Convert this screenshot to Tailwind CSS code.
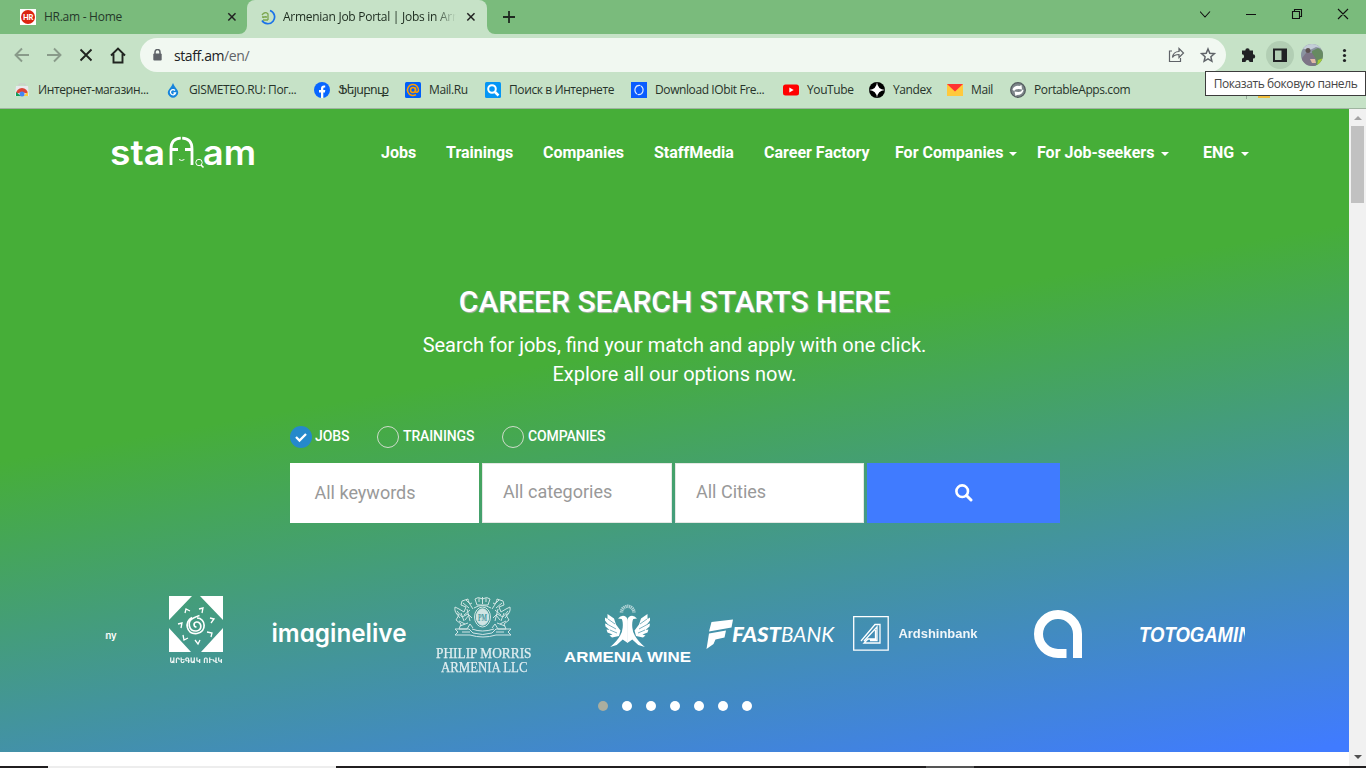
<!DOCTYPE html>
<html lang="en">
<head>
<meta charset="utf-8">
<title>Armenian Job Portal</title>
<script src="https://cdn.jsdelivr.net/npm/@tailwindcss/browser@4"></script>
</head>
<body class="relative flex h-[768px] w-[1366px] flex-col overflow-hidden bg-white font-['Roboto',sans-serif]">

<!-- Tab strip -->
<div class="flex h-[34px] shrink-0 bg-[#7abb7c] font-['Open_Sans','Noto_Sans',sans-serif] text-[12px] tracking-[-.27px] text-[#25382a]">
  <div class="flex w-[247px] items-center pl-5">
    <svg class="size-4" viewBox="0 0 16 16"><rect width="16" height="16" fill="#fff"/><circle cx="8" cy="8" r="7" fill="#dc2410"/><text x="8" y="10.800" font-size="7.500" font-weight="900" fill="#fff" text-anchor="middle" font-family="Lato">HR</text></svg>
    <span class="ml-2 w-[183px] whitespace-nowrap">HR.am - Home</span>
    <svg class="size-[10px]" viewBox="0 0 10 10"><path d="M1.300 1.300l7.200 7.200M8.500 1.300L1.300 8.500" stroke="#222" stroke-width="1.500"/></svg>
  </div>
  <div class="relative flex w-[240px] items-center rounded-t-[8px] bg-[#c6e2c7] pl-[13px]">
    <svg class="absolute bottom-0 -left-2 size-2" viewBox="0 0 8 8"><path d="M8 0v8H0a8 8 0 0 0 8-8" fill="#c6e2c7"/></svg>
    <svg class="absolute -right-2 bottom-0 size-2" viewBox="0 0 8 8"><path d="M0 0v8h8a8 8 0 0 1-8-8" fill="#c6e2c7"/></svg>
    <svg class="size-4" viewBox="0 0 16 16" fill="none"><path d="M10 1.500A6.800 6.800 0 1 1 2 11.500" stroke="#1a73e8" stroke-width="1.700"/><path d="M2 6Q5 2 8 5v6M2 8h5M3 9q1-2 4-1M3 11h5" stroke="#7ba64e" stroke-width="1.300"/></svg>
    <span class="ml-[7px] w-[173px] overflow-hidden mask-r-from-88% whitespace-nowrap text-[#1c2b1e]">Armenian Job Portal | Jobs in Armenia</span>
    <svg class="ml-[10px] size-[10px]" viewBox="0 0 10 10"><path d="M1.300 1.300l7.200 7.200M8.500 1.300L1.300 8.500" stroke="#222" stroke-width="1.500"/></svg>
  </div>
  <svg class="ml-4 mt-[11px] size-3" viewBox="0 0 12 12"><path d="M6 0v12M0 6h12" stroke="#1f2a20" stroke-width="1.800"/></svg>
  <svg class="ml-auto h-[34px] w-[166px]" viewBox="1200 0 166 34" fill="none" stroke="#111" stroke-width="1.100"><path d="M1200 11.500l5 5.500 5-5.500M1246 14.500h10M1292.500 11.500h7v7h-7zM1294.500 11.500v-2h7v7h-2M1338 9l10 10M1348 9l-10 10"/></svg>
</div>

<!-- Toolbar -->
<div class="flex h-[38px] shrink-0 items-end bg-[#c6e2c7] font-['Open_Sans','Noto_Sans',sans-serif] text-[14px]">
  <svg class="h-[38px] w-[140px]" viewBox="0 34 140 38" fill="none" stroke-width="1.900"><path d="M29 55H16M22 48.500L15.500 55l6.500 6.500M47 55h13M54 48.500l6.500 6.500-6.500 6.500" stroke="#899b8a"/><path d="M80.500 49.500l11 11M91.500 49.500l-11 11M111 55.500l7-7 7 7M113.500 54v8.500h9V54" stroke="#202420"/></svg>
  <div class="flex h-[34px] w-[1086px] items-center rounded-full bg-[#f1f8f1] pl-[13px]">
    <svg class="h-3 w-[9px]" viewBox="0 0 9 12"><path d="M2 5V3a2.500 2.500 0 0 1 5 0v2" fill="none" stroke="#5f6368" stroke-width="1.500"/><rect x=".3" y="4.500" width="8.400" height="7" rx="1" fill="#5f6368"/></svg>
    <span class="ml-3 tracking-[-.4px] text-[#202124]">staff.am<span class="text-[#5f6368]">/en/</span></span>
    <svg class="ml-auto h-[34px] w-[60px]" viewBox="1166 38 60 34" fill="none" stroke="#5f6368" stroke-width="1.200"><path d="M1172 51h-2.500v10.500h11V58M1172.500 57.500c.5-4 3-6 6.500-6v-3l4.500 4.500-4.500 4.500v-3c-3 0-5 .5-6.500 3z"/><path stroke-width="1.500" d="M1208 49l1.800 4.300 4.600.4-3.500 3.100 1 4.500-3.900-2.400-3.900 2.400 1-4.500-3.500-3.100 4.600-.4z"/></svg>
  </div>
  <svg class="h-[38px] w-[140px]" viewBox="1226 34 140 38"><path fill="#202124" d="M1242 50.500h3.300a2.200 2.200 0 1 1 4.400 0h3.300v3.700a2.200 2.200 0 1 1 0 4.400v3.400h-3.500a2 2 0 0 0-4 0H1242v-3.500a2.100 2.100 0 0 0 0-4.200z"/><circle cx="1280" cy="55" r="14" fill="#b2ceb4"/><path d="M1274 49.500h12v11.500h-12z" fill="none" stroke="#202124" stroke-width="2"/><path d="M1281.500 49h4.500v12h-4.500z" fill="#202124"/><clipPath id="avatar"><circle cx="1312" cy="55" r="11"/></clipPath><g clip-path="url(#avatar)"><path fill="#8a93a0" d="M1300 43h24v24h-24z"/><path fill="#c3cdd7" d="M1300 43h24v6l-8-2-6 3-10-2z"/><path fill="#668a61" d="M1312 51l6-3 6 4v15h-12z"/><path fill="#7d7486" d="M1302 58l4-5h6l4 6v8h-14z"/><circle cx="1308" cy="50.500" r="2.500" fill="#5d5150"/><path fill="#a3cd38" d="M1318 60l6-2v8h-7z"/><path fill="#e0bba5" d="M1310 59h5l1 4h-4z"/></g><g fill="#202124"><circle cx="1344.500" cy="50.500" r="1.600"/><circle cx="1344.500" cy="55.500" r="1.600"/><circle cx="1344.500" cy="60.500" r="1.600"/></g></svg>
</div>

<!-- Bookmarks -->
<div class="flex h-[37px] shrink-0 items-center whitespace-nowrap border-b border-[#9fb4a0] bg-[#c6e2c7] pl-[14px] font-['Open_Sans','Noto_Sans','DejaVu_Sans',sans-serif] text-[12px] tracking-[-.4px] text-[#26332a]">
  <div class="flex w-[151px] items-center gap-2"><svg class="size-4" viewBox="0 0 16 16"><path d="M2 4h12l1 10H1z" fill="#e8eaed"/><path d="M5 4V2h6v2" fill="none" stroke="#ccc"/><path d="M2 12a6 6 0 0 1 12 0l-6-2z" fill="#db4437"/><path d="M2 10l5 4H2z" fill="#0f9d58"/><path d="M9 14l5-4v4z" fill="#ffcd40"/><circle cx="8" cy="12" r="2.500" fill="#4285f4"/></svg><span>Интернет-магазин...</span></div>
  <div class="flex w-[149px] items-center gap-2"><svg class="size-4" viewBox="0 0 16 16"><path d="M8 1Q9 4 12 7.500a5 5 0 1 1-8 0Q7 4 8 1" fill="#1684dc"/><path d="M10 8.500a2.600 2.600 0 1 0 .5 2.500H8.500" fill="none" stroke="#fff" stroke-width="1.300"/></svg><span>GISMETEO.RU: Пог...</span></div>
  <div class="flex w-[91px] items-center gap-2"><svg class="size-4" viewBox="0 0 16 16"><circle cx="8" cy="8" r="8" fill="#0866ff"/><path d="M7 16v-5.500H5V8h2V6.500C7 4 8.500 3.200 11.200 3.600v2C9.800 5.500 9.300 5.700 9.300 7v1h2l-.4 2.500H9.300V16z" fill="#fff"/></svg><span class="tracking-[-.7px]">Ֆեյսբուք</span></div>
  <div class="flex w-[80px] items-center gap-2"><svg class="size-4" viewBox="0 0 16 16"><rect width="16" height="16" rx="1.500" fill="#005ff9"/><g fill="none" stroke="#ff9e00" stroke-width="1.500"><circle cx="8" cy="8" r="2.500"/><path d="M10.500 5.500V9c0 2 3 1.500 3-1A5.500 5.500 0 1 0 11 12.600"/></g></svg><span>Mail.Ru</span></div>
  <div class="flex w-[146px] items-center gap-2"><svg class="size-4" viewBox="0 0 16 16"><rect width="16" height="16" rx="1.500" fill="#0596f5"/><circle cx="7" cy="7" r="3.800" fill="none" stroke="#fff" stroke-width="2"/><path d="M10 10l3.500 3.500" stroke="#fff" stroke-width="2.500"/></svg><span>Поиск в Интернете</span></div>
  <div class="flex w-[152px] items-center gap-2"><svg class="size-4" viewBox="0 0 16 16" fill="none"><rect width="16" height="16" fill="#0b5cff"/><path d="M9.500 3.500c-6-1-7 6-3.500 8.500M6.500 12.500c6 1 7-6 3.500-8.500" stroke="#d9e8ff" stroke-width="1.200"/></svg><span>Download IObit Fre...</span></div>
  <div class="flex w-[86px] items-center gap-2"><svg class="size-4" viewBox="0 0 16 16"><rect y="2.500" width="16" height="11" rx="2.500" fill="#f00"/><path d="M6.300 5.500v5l4.400-2.500z" fill="#fff"/></svg><span>YouTube</span></div>
  <div class="flex w-[78px] items-center gap-2"><svg class="size-4" viewBox="0 0 16 16"><circle cx="8" cy="8" r="8" fill="#000"/><path d="M8 0Q8.500 7.500 16 8 8.500 8.500 8 16 7.500 8.500 0 8 7.500 7.500 8 0" fill="#fff"/></svg><span>Yandex</span></div>
  <div class="flex w-[63px] items-center gap-2"><svg class="size-4" viewBox="0 0 16 16"><path d="M0 2h16v12H0z" fill="#ffc93c"/><path d="M0 2h16L8 9.500z" fill="#f33"/></svg><span>Mail</span></div>
  <div class="flex w-[236px] items-center gap-2"><svg class="size-4" viewBox="0 0 16 16"><circle cx="8" cy="8" r="7.300" fill="#7d868a" stroke="#555d60" stroke-width="1.300"/><path d="M2.500 7.500q2-4.500 7-3.500l2-1 .5 4.500-3.500-.5q-3 0-4.500 2zM13.500 8q-1 5-6.500 5l-1.500 1-1-4.500 4 .5q3 0 4-2.500" fill="#fff"/></svg><span>PortableApps.com</span></div>
  <i class="mt-[14px] h-[3px] w-px bg-[#94ab96]"></i>
  <i class="ml-[11px] mt-[12px] h-[3px] w-[12px] bg-[#f0bd3d]"></i>
</div>

<div class="flex h-[657px] shrink-0">
  <main class="w-[1349px] bg-white">
    <section class="flex h-[643px] flex-col bg-[linear-gradient(170deg,#46ae38_40%,#407bff_99%)] text-white">
      <!-- Site navigation -->
      <header class="flex h-[87px] items-center pl-[105px] text-[16px] font-bold whitespace-nowrap">
        <svg class="h-[50px] w-[160px]" viewBox="105 127 160 50" fill="#fff" font-family="Inter" font-weight="600" font-size="34">
          <text x="110" y="164" textLength="55" lengthAdjust="spacingAndGlyphs">sta</text>
          <path d="M171 164V148q0-10.500 9.800-10.800M182.200 137.200q9.800.3 9.800 10.800v16M171 148.500h7M185 148.500h7" fill="none" stroke="#fff" stroke-width="2.800"/>
          <path d="M179 158.500q2.700 2 5.400 0" fill="none" stroke="#fff"/><circle cx="199" cy="161.500" r="3.200" fill="none" stroke="#fff"/><path d="M201 164l2.500 2.500" stroke="#fff" stroke-width="1.600"/>
          <text x="203" y="164" textLength="53" lengthAdjust="spacingAndGlyphs">am</text>
        </svg>
        <nav class="ml-[116px] flex items-center">
          <span class="w-[65px]">Jobs</span><span class="w-[97px]">Trainings</span><span class="w-[111px]">Companies</span><span class="w-[110px]">StaffMedia</span><span class="w-[131px]">Career Factory</span>
          <span class="flex w-[142px] items-center gap-[6px]">For Companies<i class="mt-[3px] border-x-4 border-t-4 border-x-transparent border-t-white"></i></span>
          <span class="flex w-[166px] items-center gap-[7px]">For Job-seekers<i class="mt-[3px] border-x-4 border-t-4 border-x-transparent border-t-white"></i></span>
          <span class="flex items-center gap-[7px]">ENG<i class="mt-[3px] border-x-4 border-t-4 border-x-transparent border-t-white"></i></span>
        </nav>
      </header>

      <h1 class="mt-[88px] h-[36px] text-center text-[30px] leading-[36px] font-medium text-shadow-[1px_1px_1px_#b4b4b4]">CAREER SEARCH STARTS HERE</h1>
      <p class="mt-[11px] h-[58px] text-center text-[20px] leading-[29px]">Search for jobs, find your match and apply with one click.<br>Explore all our options now.</p>

      <div class="mt-[37px] ml-[290px] flex h-[22px] items-center text-[14px] leading-[20px] font-medium tracking-[-.12px]">
        <span class="flex w-[87px] items-center gap-[3px]"><svg class="size-[22px]" viewBox="0 0 22 22"><circle cx="11" cy="11" r="11" fill="#2589cb"/><path d="M6 11l3.500 3.500 6.500-6.500" stroke="#fff" stroke-width="2.300" fill="none"/></svg><span class="pb-[2px]">JOBS</span></span>
        <span class="flex w-[125px] items-center gap-[4px]"><i class="size-[22px] rounded-full border border-[#cfdccb]"></i><span class="pb-[2px]">TRAININGS</span></span>
        <span class="flex items-center gap-[4px]"><i class="size-[22px] rounded-full border border-[#cfdccb]"></i><span class="pb-[2px]">COMPANIES</span></span>
      </div>

      <form class="mt-[15px] ml-[290px] flex h-[60px] gap-[3px] text-[18px] leading-[56px] text-[#999]">
        <div class="w-[189px] bg-white pt-[2px] pl-[24.500px]">All keywords</div>
        <div class="w-[190px] border border-[#e4e8e4] bg-white pl-5">All categories</div>
        <div class="w-[189px] border border-[#e4e8e4] bg-white pl-5">All Cities</div>
        <div class="flex w-[193px] items-center justify-center bg-[#407bff]"><svg class="size-[18px]" viewBox="0 0 18 18" fill="none" stroke="#fff"><circle cx="7.200" cy="7.200" r="5.800" stroke-width="2.600"/><path d="M11.500 11.500l4.500 4.500" stroke-width="3" stroke-linecap="round"/></svg></div>
      </form>

      <!-- Partner logos -->
      <svg class="mt-[57px] ml-[105px] h-[110px] w-[1140px]" viewBox="105 580 1140 110" fill="#fff">
        <text x="100" y="638.500" font-family="Inter" font-weight="600" font-size="9.500">any</text>
        <path d="M169 596h23l-23 24zM200 596h23v24zM169 628l22 24h-22zM223 628v24h-22z"/>
        <path d="M196.500 627c-3 0-3.500-4.500 0-5 5-.5 6.500 8 0 9-8 .5-10-10-3-13q3-1.500 6-2.500M197 618c9 0 10 14 0 15.500-11 1-13-12-5-16" fill="none" stroke="#fff" stroke-width="1.700"/>
        <g fill="none" stroke="#fff" stroke-width="1.300"><path d="M185 613l1-4 4 2M199 609l4-1-1 5M210 618l4 1-3 4M207 632l5 1-1 4M195 640l3 4 2-4M183 635l1 5 4-2M178 624l4-1-1 5"/></g>
        <text x="169.500" y="662.500" textLength="53" lengthAdjust="spacingAndGlyphs" font-size="7.500" font-weight="bold" font-family="DejaVu Sans" opacity=".9">ԱՐԵԳԱԿ ՈՒՎԿ</text>
        <text x="271.500" y="641.500" textLength="135" lengthAdjust="spacingAndGlyphs" font-family="Inter" font-size="25" font-weight="600" style="font-feature-settings:'cv11'">imaginelive</text>

        <g opacity=".75" fill="none" stroke="#fff">
          <ellipse cx="482.500" cy="617" rx="8" ry="10"/><ellipse cx="482.500" cy="617" rx="6.200" ry="8.200" fill="#fff"/>
          <path d="M477 605l-2-6q3-3 7.500 0 4.500-3 7.500 0l-2 6zM479 602v-4M482.500 604v-7M486 602v-4M474 608q8-5 17 0"/>
          <g id="lion"><path d="M473 609q-5-7-5-10l-6 2-1 4 5 2-2 5-5-3-4-2q-1 6 4 8l-3 5 5 4-2 5h8l3-5 3 4M466 600l4 4 2-1M457 611l5 6 6-3 4 4M465 620l4-5M459 621l6 3M470 610l-6 5M463 603l6 5M461 613l3 8M467 609l3 12M456 613l4 5M460 626l8-3"/></g>
          <use href="#lion" transform="matrix(-1 0 0 1 965 0)"/>
          <path d="M455 629h14l4 4q10 3 19 0l4-4h15l-3 3 3 3h-15q-13 4-26 0h-15l3-3zM472 629q10 4 22 0M462 632h8M496 632h8"/>
        </g>
        <text x="482.500" y="620.500" font-family="Liberation Serif" font-weight="bold" font-size="10" text-anchor="middle" textLength="9" lengthAdjust="spacingAndGlyphs" fill="#43959b">PM</text>
        <g opacity=".85" font-family="Liberation Serif" font-size="15" stroke="#fff" stroke-width=".25"><text x="436" y="658" textLength="95.500" lengthAdjust="spacingAndGlyphs">PHILIP MORRIS</text><text x="441" y="672" textLength="86.500" lengthAdjust="spacingAndGlyphs">ARMENIA LLC</text></g>

        <g id="eagle">
          <path d="M618 618.500q3-3.500 6.500-2.500 3 1 3.200 5v22l-5-3.500-6 5.500-6.500 2q7-6 10-11.500 2-3 2.500-8 .5-6-1-8.500z"/>
          <path d="M607.500 614l6.500 4.500 2 6 4.500 6-1.500 5.500-7 1.500-2.500-2 3-1-5-2-1-3 3 .5-4-3.500-.5-3 3 1-3-4v-3l2.500 1.500z"/>
        </g>
        <use href="#eagle" transform="matrix(-1 0 0 1 1255 0)"/>
        <path d="M608 619l7 5M607 624l9 5M610 630l7 3M647 619l-7 5M648 624l-9 5M645 630l-7 3" stroke="#4491a5" stroke-width=".7"/>
        <path d="M621.500 612.500a6.200 6.200 0 0 1 12.400 0" fill="none" stroke="#fff" stroke-width="3.500" stroke-dasharray="1.200 .6" opacity=".6"/>
        <text x="564" y="661.500" textLength="127" lengthAdjust="spacingAndGlyphs" font-family="Liberation Sans" font-weight="bold" font-size="14">ARMENIA WINE</text>

        <path d="M711.500 622l21.500-2.500-1.500 8-22.500 4zM709 633.500l17-3-1.500 7-9 2-2 4.500-7 5z"/>
        <text x="732" y="642" textLength="49" lengthAdjust="spacingAndGlyphs" font-family="Lato" font-style="italic" font-weight="900" font-size="21.500">FAST</text>
        <text x="781" y="642" textLength="53" lengthAdjust="spacingAndGlyphs" font-family="Lato" font-style="italic" font-weight="400" font-size="21.500">BANK</text>

        <g fill="none" stroke="#fff" stroke-width="1.300"><path d="M853.700 616.700h34.500v33.500h-34.500z"/><path d="M861 641l14-16.500h5v18.500h-16l4-4h7.500v-9M864 641l13-14v13.500h-7"/></g>
        <text x="898.500" y="638" textLength="79" lengthAdjust="spacingAndGlyphs" font-family="Liberation Sans" font-weight="bold" font-size="12.500" opacity=".92">Ardshinbank</text>

        <path d="M1066.500 653.500h-8.500a19.500 19.500 0 1 1 19.500-19.500v24" fill="none" stroke="#fff" stroke-width="9"/>
        <text x="1139" y="642" textLength="127" lengthAdjust="spacingAndGlyphs" font-family="Liberation Sans" font-weight="bold" font-style="italic" font-size="22">TOTOGAMING</text>
      </svg>
      <div class="mt-[11px] flex justify-center gap-[14px]">
        <i class="size-[10px] rounded-full bg-[#aaae9f]"></i><i class="size-[10px] rounded-full bg-white"></i><i class="size-[10px] rounded-full bg-white"></i><i class="size-[10px] rounded-full bg-white"></i><i class="size-[10px] rounded-full bg-white"></i><i class="size-[10px] rounded-full bg-white"></i><i class="size-[10px] rounded-full bg-white"></i>
      </div>
    </section>
  </main>
  <!-- Scrollbar -->
  <div class="flex w-[17px] flex-col items-center bg-[#f1f1f1]">
    <i class="mt-[7px] border-x-[4px] border-b-4 border-x-transparent border-b-[#a3a3a3]"></i>
    <div class="mt-[6px] h-[77px] w-[13px] bg-[#c1c1c1]"></div>
    <i class="mt-auto mb-[7px] border-x-[4px] border-t-4 border-x-transparent border-t-[#505050]"></i>
  </div>
</div>
<div class="flex h-[2px] bg-[#211f20]"><i class="ml-12 w-[288px] bg-[#ededed]"></i><i class="ml-[590px] w-12 bg-[#555]"></i></div>

<div class="absolute top-[71px] right-0 flex h-[25px] w-[161px] items-center justify-center border border-[#3c3c3c] bg-white font-['Open_Sans','Noto_Sans',sans-serif] text-[12px] tracking-[-.42px] whitespace-nowrap text-[#454545]">Показать боковую панель</div>
</body>
</html>
